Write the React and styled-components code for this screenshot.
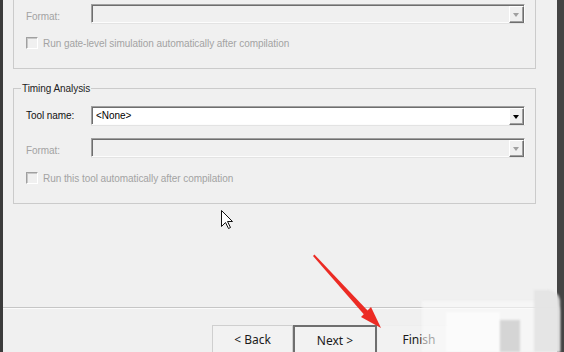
import React from 'react'
import styled, { createGlobalStyle } from 'styled-components'

const GlobalStyle = createGlobalStyle`
  html, body {
    margin: 0;
    padding: 0;
    background: #f0f0f0;
    overflow: hidden;
  }
  #root {
    width: 564px;
    height: 352px;
  }
`

const Screen = styled.div`
  position: relative;
  display: flex;
  width: 564px;
  height: 352px;
  overflow: hidden;
  background: #f0f0f0;
  font-family: "Liberation Sans", Arial, sans-serif;
  font-size: 10px;
  letter-spacing: -0.06px;
`

const Edge = styled.div`
  flex: 0 0 ${p => p.$w}px;
  background: ${p => p.$color};
`

const Dialog = styled.div`
  flex: 1;
  min-width: 0;
  display: flex;
  flex-direction: column;
`

const Body = styled.div`
  flex: 1;
  display: flex;
  flex-direction: column;
  padding: 0 21px 0 10px;
`

// top group box, scrolled so its top edge is out of view
const CutGroup = styled.div`
  border: 1px solid #cbcbcb;
  border-top: none;
  padding: 4px 10px 19px 12px;
`

const Group = styled.fieldset`
  margin: 13px 0 0;
  border: 1px solid #cbcbcb;
  padding: 0 10px 19px 12px;
  min-width: 0;
`

const Legend = styled.legend`
  margin-left: -5px;
  padding: 0 1px;
  line-height: 13px;
  color: #222;
`

const FieldRow = styled.div`
  display: flex;
  align-items: center;
  height: 19px;
  margin-top: ${p => p.$top || 0}px;
`

const Label = styled.div`
  flex: 0 0 65px;
  color: ${p => (p.$disabled ? '#a3a3a3' : '#111')};
  padding-top: ${p => (p.$disabled ? 5 : 0)}px;
`

const Combo = styled.div`
  flex: 1;
  display: flex;
  align-items: center;
  height: 19px;
  box-sizing: border-box;
  border-top: 1px solid #a0a0a0;
  border-left: 1px solid #a0a0a0;
  border-bottom: 1px solid #fcfcfc;
  border-right: 1px solid #fcfcfc;
  box-shadow: inset 1px 1px 0 #6e6e6e, 0 1px 0 #e3e3e3;
  background: ${p => (p.$disabled ? '#f0f0f0' : '#fff')};
`

const ComboText = styled.span`
  flex: 1;
  padding-left: 4px;
  color: #000;
`

const ComboButton = styled.div`
  flex: 0 0 15px;
  height: 17px;
  box-sizing: border-box;
  display: flex;
  align-items: center;
  justify-content: center;
  background: #f0f0f0;
  border-top: 1px solid #fff;
  border-left: 1px solid #fff;
  border-right: 1px solid #6e6e6e;
  border-bottom: 1px solid #6e6e6e;
  box-shadow: inset -1px -1px 0 #a0a0a0;
  margin-top: 1px;
`

const Arrow = styled.span`
  width: 0;
  height: 0;
  border-left: 3.5px solid transparent;
  border-right: 3.5px solid transparent;
  border-top: 4px solid ${p => (p.$disabled ? '#a0a0a0' : '#000')};
  margin: 1px 0 0 -1px;
`

const CheckRow = styled.div`
  display: flex;
  align-items: center;
  height: 12px;
  margin-top: ${p => p.$top}px;
  color: #a3a3a3;
`

const CheckBox = styled.span`
  width: 12px;
  height: 12px;
  box-sizing: border-box;
  border-top: 1px solid #a0a0a0;
  border-left: 1px solid #a0a0a0;
  border-right: 1px solid #fff;
  border-bottom: 1px solid #fff;
  box-shadow: inset 1px 1px 0 #c8c8c8;
  margin-right: 5px;
`

const Spacer = styled.div`
  flex: 1;
`

const Separator = styled.div`
  height: 0;
  border-top: 1px solid #c6c6c6;
  border-bottom: 1px solid #fbfbfb;
`

const ButtonRow = styled.div`
  display: flex;
  height: 43px;
  padding: 16px 0 0 209px;
  box-sizing: border-box;
`

const Button = styled.div`
  flex: 0 0 ${p => p.$w}px;
  height: 30px;
  box-sizing: border-box;
  display: flex;
  align-items: flex-start;
  justify-content: center;
  padding-top: 5px;
  background: #f2f2f2;
  border: ${p => (p.$default ? '2px solid #6f6f6f' : p.$flat ? '1px solid #eeeeee' : '1px solid #cfcfcf')};
  font-family: "Noto Sans", "Noto Sans CJK SC", sans-serif;
  font-size: 12px;
  letter-spacing: 0;
  color: #1a1a1a;
`

const Overlay = styled.svg`
  position: absolute;
  left: 0;
  top: 0;
  pointer-events: none;
`

const Watermark = styled.div`
  position: absolute;
  left: 422px;
  top: 290px;
  width: 138px;
  height: 62px;
  pointer-events: none;
`

const Blot = styled.div`
  position: absolute;
  left: ${p => p.$x}px;
  top: ${p => p.$y}px;
  width: ${p => p.$w}px;
  height: ${p => p.$h}px;
  background: ${p => p.$c};
  border-top-right-radius: ${p => p.$r || 0}px;
  filter: blur(1px);
`

function Field({ label, value, disabled, top }) {
  return (
    <FieldRow $top={top}>
      <Label $disabled={disabled}>{label}</Label>
      <Combo $disabled={disabled}>
        <ComboText>{value}</ComboText>
        <ComboButton>
          <Arrow $disabled={disabled} />
        </ComboButton>
      </Combo>
    </FieldRow>
  )
}

function Check({ text, top }) {
  return (
    <CheckRow $top={top}>
      <CheckBox />
      {text}
    </CheckRow>
  )
}

export default function App() {
  return (
    <Screen>
      <GlobalStyle />
      <Edge $w={3} $color="#3c3c3c" />
      <Dialog>
        <Body>
          <CutGroup>
            <Field label="Format:" disabled />
            <Check top={14} text="Run gate-level simulation automatically after compilation" />
          </CutGroup>

          <Group>
            <Legend>Timing Analysis</Legend>
            <Field top={11} label="Tool name:" value="<None>" />
            <Field top={13} label="Format:" disabled />
            <Check top={15} text="Run this tool automatically after compilation" />
          </Group>
          <Spacer />
        </Body>
        <Separator />
        <ButtonRow>
          <Button $w={81}>&lt; Back</Button>
          <Button $w={84} $default>Next &gt;</Button>
          <Button $w={84} $flat>Finish</Button>
        </ButtonRow>
      </Dialog>
      <Edge $w={7} $color="#444444" />

      <Watermark>
        <Blot $x={0} $y={11} $w={138} $h={51} $c="rgba(250,250,250,0.6)" $r={10} />
        <Blot $x={24} $y={22} $w={54} $h={40} $c="rgba(255,255,255,0.55)" />
        <Blot $x={78} $y={30} $w={20} $h={32} $c="rgba(205,205,205,0.8)" />
        <Blot $x={112} $y={0} $w={26} $h={62} $c="rgba(228,228,228,0.95)" $r={12} />
      </Watermark>

      <Overlay width="564" height="352" viewBox="0 0 564 352">
        {/* mouse pointer */}
        <path
          d="M221.5 210.5 L221.5 226.5 L225.5 222.5 L228.5 228.5 L230.5 227.5 L227.5 221.5 L232.5 221.5 Z"
          fill="#fff"
          stroke="#111"
          strokeWidth="1"
          strokeLinejoin="miter"
        />
        {/* red annotation arrow */}
        <polygon points="313,256 314.4,254.6 368,311 364,314.5" fill="#ec2b24" />
        <polygon points="381,328 361,317 371,307" fill="#ec2b24" />
      </Overlay>
    </Screen>
  )
}
